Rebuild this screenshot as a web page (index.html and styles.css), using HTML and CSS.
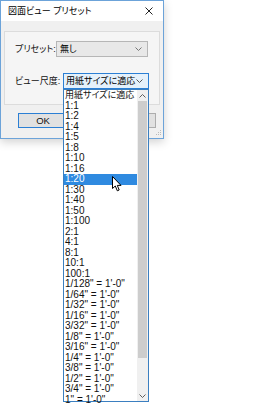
FILE: index.html
```html
<!DOCTYPE html>
<html lang="ja">
<head>
  <meta charset="UTF-8" />
  <title>図面ビュー プリセット</title>
  <link rel="stylesheet" href="styles.css">
</head>
<body>

  <div class="window">
    <div class="titlebar">
      <span class="title">図面ビュー プリセット</span>
      <svg class="close" width="8" height="8" viewBox="0 0 8 8">
        <path d="M0.5 0.5 L7.5 7.5 M7.5 0.5 L0.5 7.5" stroke="#222" stroke-width="1" fill="none" />
      </svg>
    </div>

    <div class="client">
      <div class="panel">
        <div class="row">
          <span class="label">プリセット:</span>
          <div class="combo combo-preset">
            <span>無し</span>
            <svg class="chevron" width="7" height="4" viewBox="0 0 7 4"><path d="M0.5 0.5 L3.5 3.5 L6.5 0.5" stroke="#777" fill="none" /></svg>
          </div>
        </div>
        <div class="row">
          <span class="label">ビュー尺度:</span>
          <div class="combo combo-scale">
            <span>用紙サイズに適応</span>
            <svg class="chevron" width="7" height="4" viewBox="0 0 7 4"><path d="M0.5 0.5 L3.5 3.5 L6.5 0.5" stroke="#555" fill="none" /></svg>
          </div>
        </div>
      </div>

      <div class="buttons">
        <button class="btn btn-default">OK</button>
        <button class="btn btn-cancel">キャンセル</button>
      </div>

      <svg class="grip" width="7" height="7" viewBox="0 0 7 7">
        <rect x="5" y="0" width="1" height="1" fill="#bbb" />
        <rect x="3" y="2" width="1" height="1" fill="#bbb" />
        <rect x="5" y="2" width="1" height="1" fill="#bbb" />
        <rect x="1" y="4" width="1" height="1" fill="#bbb" />
        <rect x="3" y="4" width="1" height="1" fill="#bbb" />
        <rect x="5" y="4" width="1" height="1" fill="#bbb" />
      </svg>
    </div>
  </div>

  <div class="dropdown">
    <ul class="items">
      <li class="cjk">用紙サイズに適応</li>
      <li>1:1</li>
      <li>1:2</li>
      <li>1:4</li>
      <li>1:5</li>
      <li>1:8</li>
      <li>1:10</li>
      <li>1:16</li>
      <li class="selected">1:20</li>
      <li>1:30</li>
      <li>1:40</li>
      <li>1:50</li>
      <li>1:100</li>
      <li>2:1</li>
      <li>4:1</li>
      <li>8:1</li>
      <li>10:1</li>
      <li>100:1</li>
      <li>1/128" = 1'-0"</li>
      <li>1/64" = 1'-0"</li>
      <li>1/32" = 1'-0"</li>
      <li>1/16" = 1'-0"</li>
      <li>3/32" = 1'-0"</li>
      <li>1/8" = 1'-0"</li>
      <li>3/16" = 1'-0"</li>
      <li>1/4" = 1'-0"</li>
      <li>3/8" = 1'-0"</li>
      <li>1/2" = 1'-0"</li>
      <li>3/4" = 1'-0"</li>
      <li>1" = 1'-0"</li>
    </ul>
    <div class="scrollbar">
      <div class="arrow">
        <svg width="7" height="4" viewBox="0 0 7 4"><path d="M0.5 3.5 L3.5 0.5 L6.5 3.5" stroke="#606060" fill="none" /></svg>
      </div>
      <div class="thumb"></div>
      <div class="track"></div>
      <div class="arrow">
        <svg width="7" height="4" viewBox="0 0 7 4"><path d="M0.5 0.5 L3.5 3.5 L6.5 0.5" stroke="#606060" fill="none" /></svg>
      </div>
    </div>
  </div>

  <svg class="cursor" width="11" height="16" viewBox="0 0 11 16">
    <path d="M0.5 0.5 L0.5 12.5 L3.3 10 L5.3 14.8 L7.2 14 L5.3 9.4 L9 9.4 Z" fill="#fff" stroke="#000" stroke-width="1" stroke-linejoin="miter" />
  </svg>

</body>
</html>
```

FILE: styles.css
```css
* {
  box-sizing: border-box;
}

body {
  margin: 0;
  background: #fff;
  font-family: "Liberation Sans", "Noto Sans CJK JP", sans-serif;
  font-feature-settings: "palt";
  color: #000;
  position: relative;
  height: 407px;
  overflow: hidden;
}

.window {
  width: 164px;
  height: 139px;
  border: 1px solid #6ca3d9;
  background: #f0f0f0;
  display: flex;
  flex-direction: column;
  box-shadow: 0 3px 9px rgba(0, 0, 0, 0.18);
}

.titlebar {
  height: 20px;
  background: #fff;
  display: flex;
  align-items: center;
  justify-content: space-between;
  padding: 0 10px 0 7px;
}

.title {
  font-size: 9px;
  line-height: 10px;
  white-space: nowrap;
}

.close {
  display: block;
}

.client {
  flex: 1;
  position: relative;
  display: flex;
  flex-direction: column;
}

.panel {
  margin: 10px 3px 0 3px;
  height: 74px;
  border: 1px solid #dcdcdc;
  background: #f5f5f5;
  padding: 9px 10px 0 10px;
  display: flex;
  flex-direction: column;
  gap: 16px;
}

.row {
  display: flex;
  align-items: center;
  height: 16px;
}

.label {
  font-size: 9px;
  line-height: 10px;
  color: #111;
  white-space: nowrap;
  flex-shrink: 0;
}

.combo {
  margin-left: auto;
  flex-shrink: 0;
  height: 16px;
  display: flex;
  align-items: center;
  justify-content: space-between;
  padding: 0 5px 0 3px;
  font-size: 9px;
  line-height: 10px;
  white-space: nowrap;
}

.combo-preset {
  width: 92px;
  margin-right: 1px;
  background: #e8e8e8;
  border: 1px solid #b6b6b6;
}

.combo-scale {
  width: 86px;
  padding-left: 2px;
  background: #e5f1fb;
  border: 1px solid #2b7fd4;
}

.chevron {
  display: block;
  flex-shrink: 0;
}

.buttons {
  margin-top: 8px;
  padding: 0 7px 0 17px;
  display: flex;
  justify-content: space-between;
}

.btn {
  width: 50px;
  height: 15px;
  padding: 0;
  border: 1px solid #adadad;
  background: #e1e1e1;
  font-family: "Liberation Sans", "Noto Sans CJK JP", sans-serif;
  font-size: 9.5px;
  line-height: 10px;
  color: #111;
  white-space: nowrap;
}

.btn-default {
  border-color: #2b7fd4;
}

.btn-cancel {
  width: 62px;
  font-size: 9px;
}

.grip {
  position: absolute;
  right: 1px;
  bottom: 1px;
}

.dropdown {
  position: absolute;
  left: 63px;
  top: 89px;
  width: 86px;
  height: 313px;
  background: #fff;
  border: 1px solid #3b7fc0;
  display: flex;
}

.items {
  list-style: none;
  margin: 0;
  padding: 0;
  flex: 1;
  min-width: 0;
}

.items li {
  height: 10.5px;
  line-height: 10.5px;
  font-size: 10px;
  padding-left: 1px;
  white-space: nowrap;
  overflow: hidden;
  color: #111;
}

.items li.cjk {
  font-size: 9px;
}

.items li.selected {
  background: #2f8ae0;
  color: #fff;
}

.scrollbar {
  width: 11px;
  flex-shrink: 0;
  background: #f0f0f0;
  display: flex;
  flex-direction: column;
}

.arrow {
  height: 11px;
  display: flex;
  align-items: center;
  justify-content: center;
}

.arrow svg {
  display: block;
}

.thumb {
  height: 257px;
  margin: 0 1px;
  background: #cdcdcd;
}

.track {
  flex: 1;
}

.cursor {
  position: absolute;
  left: 112px;
  top: 176px;
}
```
